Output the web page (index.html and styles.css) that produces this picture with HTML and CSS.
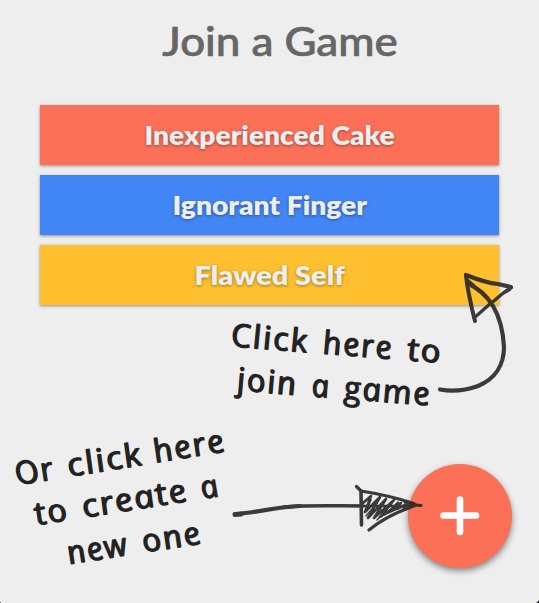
FILE: index.html
```html
<!DOCTYPE html>
<html lang="en">
<head>
<meta charset="utf-8">
<title>Join a Game</title>
<link rel="stylesheet" href="styles.css">
</head>
<body>
<main class="page">
  <h1 class="title"><span>Join a Game</span></h1>
  <div class="games">
    <button class="game coral"><span>Inexperienced Cake</span></button>
    <button class="game blue"><span>Ignorant Finger</span></button>
    <button class="game yellow"><span class="short">Flawed Self</span></button>
  </div>
  <button class="fab" aria-label="Create game">
    <svg width="40" height="40" viewBox="0 0 40 40"><path d="M20 3.500V36M3.500 19.500H36" stroke="#fff" stroke-width="6.600" stroke-linecap="round"/></svg>
  </button>
  <svg class="notes" width="539" height="603" viewBox="0 0 539 603">
    <g class="hand">
      <g transform="translate(232 346.5) rotate(4.5) skewX(12)"><text textLength="78" lengthAdjust="spacingAndGlyphs">Click</text><text x="92" textLength="71" lengthAdjust="spacingAndGlyphs">here</text><text x="177" textLength="35" lengthAdjust="spacingAndGlyphs">to</text></g>
      <g transform="translate(238 390.5) rotate(4.5) skewX(12)"><text textLength="61" lengthAdjust="spacingAndGlyphs">join</text><text x="75" textLength="19" lengthAdjust="spacingAndGlyphs">a</text><text x="107" textLength="88" lengthAdjust="spacingAndGlyphs">game</text></g>
      <g transform="translate(18.500 485) rotate(-9.2) skewX(12)"><text textLength="40" lengthAdjust="spacingAndGlyphs">Or</text><text x="53" textLength="76" lengthAdjust="spacingAndGlyphs">click</text><text x="140" textLength="73" lengthAdjust="spacingAndGlyphs">here</text></g>
      <g transform="translate(38 525) rotate(-9) skewX(12)"><text textLength="34" lengthAdjust="spacingAndGlyphs">to</text><text x="48" textLength="107" lengthAdjust="spacingAndGlyphs">create</text><text x="168" textLength="19" lengthAdjust="spacingAndGlyphs">a</text></g>
      <g transform="translate(70.500 564) rotate(-8.8) skewX(12)"><text textLength="62" lengthAdjust="spacingAndGlyphs">new</text><text x="76" textLength="60" lengthAdjust="spacingAndGlyphs">one</text></g>
    </g>
    <g class="ink">
      <path stroke-width="4.200" d="M440 389.500C453 392 467 390 478 386C495 379 504 365 504 347C503 328 499 316 493 306C487 296 478 288 467 283"/>
      <path stroke-width="4.200" d="M466 275C476 279 487 283 498 284L511 287"/>
      <path stroke-width="4" d="M466 275C467 287 470 299 472 309L475 321"/>
      <path stroke-width="3.200" d="M511 288C502 292 499 298 491 303L474 318"/>
      <path stroke-width="2" d="M467 279L474 285M503 294L510 290"/>
      <path stroke-width="4.200" d="M235 514.500L245 513C263 511 279 507 300 506"/>
      <path stroke-width="3.500" d="M284 507C310 505 335 506 363 506"/>
      <path stroke-width="5" d="M235 514.500L241 514"/>
      <path stroke-width="3.200" d="M356.500 486.500L361 491C380 494 397 498 412 503L416 505L411 507C395 513 382 519 369 530M416 505L421 505.500"/>
      <path stroke-width="3.600" d="M361 491L361.500 525"/>
      <path stroke-width="3" d="M405 502L414 504L404 508"/>
      <path stroke-width="2.600" d="M363 503L371 496L365 512L380 497L368 518L386 499L374 518L394 500L380 517L401 503L387 513L407 504L397 509M363 506H412"/>
      <path stroke-width="1.500" d="M366 516L377 503M377 520L391 505M385 515L398 502M371 500L367 509M389 511L399 503"/>
    </g>
    <path fill="#111827" d="M539 600V603H536Q538 602 539 600Z"/>
    <path fill="#477873" d="M0 602H1V603H0Z"/>
  </svg>
</main>
</body>
</html>
```

FILE: styles.css
```css
body {
  margin: 0;
  background: #eee;
  font-family: Lato, "Open Sans", sans-serif;
}

.page {
  position: relative;
  box-sizing: border-box;
  width: 539px;
  height: 603px;
  padding: 0 40px;
  overflow: hidden;
}

.title {
  margin: 0 -21px 0 0;
  height: 105px;
  color: #666;
  font-size: 41px;
  line-height: 82px;
  font-weight: 500;
  text-align: center;
  white-space: nowrap;
  -webkit-text-stroke: 0.7px #666;
}

.title span {
  display: inline-block;
  transform: scaleX(1.07);
}

.games {
  display: flex;
  flex-direction: column;
  gap: 10px;
}

.game {
  height: 60px;
  padding: 0;
  border: 0;
  box-shadow: 0 1px 3px rgba(0, 0, 0, 0.4);
  color: #eee;
  font: 800 26px/59px Lato, "Open Sans", sans-serif;
  text-align: center;
  text-shadow: 0 1px 3px rgba(0, 0, 0, 0.4);
  white-space: nowrap;
}

.game span {
  display: inline-block;
  transform: scaleX(1.083);
}

.game .short {
  transform: scaleX(1.11);
}

.coral { background: #fc7058; }
.blue { background: #4286f5; }
.yellow { background: #fec02f; }

.fab {
  position: absolute;
  right: 27px;
  bottom: 35px;
  display: flex;
  align-items: center;
  justify-content: center;
  width: 104px;
  height: 104px;
  padding: 0;
  border: 0;
  border-radius: 50%;
  background: #fc7058;
  box-shadow: 0 3px 6px rgba(0, 0, 0, 0.45);
}

.notes {
  position: absolute;
  left: 0;
  top: 0;
  pointer-events: none;
}

.hand {
  fill: #222;
  stroke: #222;
  stroke-width: 1.2px;
  stroke-linejoin: round;
  font: italic 500 32px "Open Sans", "Noto Sans", sans-serif;
  letter-spacing: 1.5px;
}

.ink {
  fill: none;
  stroke: #222;
  stroke-linecap: round;
  stroke-linejoin: round;
  opacity: 0.88;
}
```
